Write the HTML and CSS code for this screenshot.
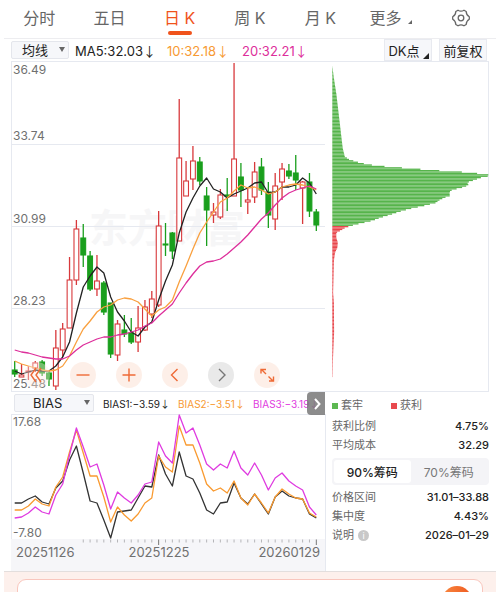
FILE: index.html
```
<!DOCTYPE html>
<html lang="zh">
<head>
    <meta charset="UTF-8">
    <meta name="viewport" content="width=device-width, initial-scale=1.0">
    <title>日K</title>
    <link rel="stylesheet" href="styles.css">
</head>
<body>
    <nav class="tabs">
        <a href="#">分时</a>
        <a href="#">五日</a>
        <a href="#" class="active">日 K</a>
        <a href="#">周 K</a>
        <a href="#">月 K</a>
        <a href="#" class="more">更多</a>
        <button class="settings" aria-label="设置">
            <svg width="20" height="20" viewBox="0 0 20 20" fill="none" stroke="#666" stroke-width="1.3" stroke-linejoin="round">
                <path d="M7 2.2 Q10 4.2 13 2.2 L15.2 3.5 Q15.2 7 18.3 8.7 V11.3 Q15.2 13 15.2 16.5 L13 17.8 Q10 15.8 7 17.8 L4.8 16.5 Q4.8 13 1.7 11.3 V8.7 Q4.8 7 4.8 3.5 Z"/>
                <circle cx="10" cy="10" r="2.8"/>
            </svg>
        </button>
    </nav>

    <main class="stock">
        <div class="toolbar">
            <span class="select">
                <select aria-label="主图指标"><option>均线</option></select>
            </span>
            <span class="ma5">MA5:32.03<i>↓</i></span>
            <span class="ma10">10:32.18<i>↓</i></span>
            <span class="ma20">20:32.21<i>↓</i></span>
            <div class="actions">
                <button class="dk">DK点</button>
                <button>前复权</button>
            </div>
        </div>

        <div class="columns">
            <section class="charts">
                <div class="kline">
                    <svg id="kline" viewBox="11 61 315 331">
                        <text class="watermark" x="89" y="242">东方财富</text>
                        <path class="grid" d="M11.5 61V392M11 61.5H326M11 144.5H325M11 226.5H325M11 308.5H325M11 391.5H326"/>
                        <g class="axis">
                            <text x="13" y="74">36.49</text>
                            <text x="13" y="140">33.74</text>
                            <text x="13" y="223">30.99</text>
                            <text x="13" y="305">28.23</text>
                            <text x="13" y="388">25.48</text>
                        </g>
                    </svg>
                    <div class="controls">
                        <button class="faint" aria-label="最早"><svg viewBox="0 0 26 26"><path d="M12 6L7 13L12 20M17 6L12 13L17 20"/></svg></button>
                        <button aria-label="缩小"><svg viewBox="0 0 26 26"><path d="M6.500 13H19.500"/></svg></button>
                        <button aria-label="放大"><svg viewBox="0 0 26 26"><path d="M6.500 13H19.500M13 6.500V19.500"/></svg></button>
                        <button aria-label="左移"><svg viewBox="0 0 26 26"><path d="M15.500 7L9.500 13L15.500 19"/></svg></button>
                        <button class="off" aria-label="右移"><svg viewBox="0 0 26 26"><path d="M11 7L17 13L11 19"/></svg></button>
                        <button aria-label="全屏"><svg viewBox="0 0 26 26"><path d="M7 11.500V7.500H12M7.500 7.500L12 12M19.500 14.500V19H15M19 19L14.500 14.500"/></svg></button>
                    </div>
                </div>

                <div class="bias-bar">
                    <span class="select">
                        <select aria-label="副图指标"><option>BIAS</option></select>
                    </span>
                    <span class="b1">BIAS1:−3.59<i>↓</i></span>
                    <span class="b2">BIAS2:−3.51<i>↓</i></span>
                    <span class="b3">BIAS3:−3.19<i>↓</i></span>
                    <button class="next" aria-label="更多指标">
                        <svg width="8" height="12" viewBox="0 0 8 12"><path d="M2 1L6.500 6L2 11" fill="none" stroke="#fff" stroke-width="2"/></svg>
                    </button>
                </div>

                <svg id="bias" viewBox="11 414 315 157">
                    <rect x="11" y="539" width="314" height="32" fill="#f6f6f9"/>
                    <path class="grid" d="M11.5 414V539M11 414.5H325M325.5 414V571"/>
                    <g class="axis">
                        <text x="13" y="426">17.68</text>
                        <text x="13" y="537">-7.80</text>
                    </g>
                    <g class="dates">
                        <text x="16" y="557">20251126</text>
                        <text x="159" y="557" text-anchor="middle">20251225</text>
                        <text x="320" y="557" text-anchor="end">20260129</text>
                    </g>
                </svg>
            </section>

            <section class="chips">
                <svg id="chips" viewBox="326 61 163 331">
                    <path class="grid" d="M326 61.5H489M488.5 61V392M326 391.5H489"/>
                </svg>
                <div class="info">
                    <div class="legend">
                        <span class="down">套牢</span>
                        <span class="up">获利</span>
                    </div>
                    <dl>
                        <dt>获利比例</dt><dd>4.75%</dd>
                        <dt>平均成本</dt><dd>32.29</dd>
                    </dl>
                    <div class="segmented">
                        <button class="on">90%筹码</button>
                        <button>70%筹码</button>
                    </div>
                    <dl>
                        <dt>价格区间</dt><dd>31.01–33.88</dd>
                        <dt>集中度</dt><dd>4.43%</dd>
                        <dt>说明 <span class="tip">i</span></dt><dd>2026–01–29</dd>
                    </dl>
                </div>
            </section>
        </div>
    </main>

    <section class="promo">
        <div class="promo-card"><span class="ball"></span></div>
    </section>

    <script src="chart.js"></script>
</body>
</html>
```
FILE: styles.css
```
* {
    box-sizing: border-box;
}
body {
    margin: 0;
    height: 100vh;
    display: flex;
    flex-direction: column;
    overflow: hidden;
    background: #fff;
    color: #222;
    font-family: Inter, "Noto Sans CJK SC", sans-serif;
    font-size: 13px;
}
button, select {
    font: inherit;
    color: inherit;
    border: 0;
    padding: 0;
    margin: 0;
    background: none;
}
i {
    font-style: normal;
    font-family: "Noto Sans CJK SC", sans-serif;
    display: inline-block;
    width: 12px;
}
svg {
    display: block;
}

/* period tabs */
.tabs {
    display: flex;
    height: 39px;
    margin: 0 4px;
    border-bottom: 1px solid #ededf0;
}
.tabs a, .settings {
    flex: 1;
    display: flex;
    justify-content: center;
    position: relative;
    padding-top: 6px;
    line-height: 24px;
    font-size: 16px;
    color: #666;
    text-decoration: none;
}
.settings {
    padding-top: 8px;
}
.tabs .active {
    color: #f0531c;
}
.tabs .active::after {
    content: "";
    position: absolute;
    left: 50%;
    bottom: 3px;
    width: 24px;
    height: 4px;
    margin-left: -12px;
    border-radius: 2px;
    background: #f0531c;
}
.more::after {
    content: "";
    align-self: flex-start;
    margin: 14px 0 0 6px;
    border: 2px solid #666;
    border-top-color: transparent;
    border-left-color: transparent;
}

/* main chart header */
.stock {
    margin: 0 4px;
    padding: 0 7px;
}
.toolbar {
    display: flex;
    align-items: center;
    height: 22px;
    white-space: nowrap;
}
.select {
    position: relative;
    flex: none;
    width: 58px;
    height: 18px;
    margin-right: 6px;
}
.select select {
    appearance: none;
    width: 100%;
    height: 100%;
    padding-left: 10px;
    border: 1px solid #e4e6ec;
    border-radius: 2px;
    background: #f6f7fa;
    line-height: 16px;
}
.select::after {
    content: "";
    position: absolute;
    right: 4px;
    top: 6px;
    border: 3px solid transparent;
    border-top: 5px solid #666;
    border-bottom: 0;
}
.ma5 {
    width: 92px;
}
.ma10 {
    width: 75px;
    color: #f79a33;
}
.ma20 {
    color: #dd2f9b;
}
.actions {
    display: flex;
    gap: 7px;
    margin: 0 2px 0 auto;
}
.actions button {
    position: relative;
    width: 48px;
    height: 22px;
    border: 1px solid #e8eaf0;
    background: #f6f7fa;
}
.actions .dk {
    padding-right: 8px;
}
.dk::after {
    content: "";
    position: absolute;
    right: 2px;
    bottom: 1px;
    border: 3px solid #222;
    border-top-color: transparent;
    border-left-color: transparent;
}

/* charts */
.columns {
    display: grid;
    grid-template-columns: 315fr 163fr;
}
.columns section {
    min-width: 0;
}
.columns section > svg, .kline > svg {
    width: 100%;
    height: auto;
}
.kline {
    position: relative;
}
.grid {
    stroke: #e6e9f0;
    fill: none;
}
.axis {
    font-size: 12px;
    fill: #707070;
}
.dates {
    font-size: 13px;
    fill: #707070;
}
.watermark {
    font-size: 39px;
    font-weight: 700;
    fill: #f6f6f7;
}
.line {
    fill: none;
    stroke-width: 1.3;
    stroke-linejoin: round;
}
.controls {
    position: absolute;
    left: 13px;
    bottom: 4px;
    display: flex;
    gap: 20px;
}
.controls button {
    width: 26px;
    height: 26px;
    border-radius: 50%;
    background: rgba(253, 236, 228, 0.85);
}
.controls path {
    fill: none;
    stroke: #ee6a35;
    stroke-width: 1.4;
}
.controls .faint {
    background: rgba(253, 236, 228, 0.4);
}
.controls .off {
    background: #e9e9e9;
}
.controls .off path {
    stroke: #777;
}

/* indicator header */
.bias-bar {
    position: relative;
    display: flex;
    align-items: center;
    height: 22px;
    padding-left: 3px;
    font-size: 10px;
    white-space: nowrap;
}
.bias-bar .select {
    width: 80px;
    margin-right: 9px;
    font-size: 13px;
}
.bias-bar select {
    padding-left: 18px;
}
.bias-bar span + span {
    flex: none;
    width: 75px;
}
.bias-bar .b2 {
    color: #f79a33;
}
.bias-bar .b3 {
    color: #df3be0;
}
.next {
    position: absolute;
    right: 1px;
    top: 0;
    width: 18px;
    height: 23px;
    padding-left: 6px;
    border-radius: 4px 0 0 4px;
    background: rgba(120, 120, 120, 0.85);
}

/* chip distribution */
.info {
    padding: 5px 0 0 6px;
    font-size: 12px;
}
.legend {
    display: flex;
    height: 20px;
    line-height: 17px;
    font-size: 11px;
    color: #666;
}
.legend span {
    width: 59px;
}
.legend span::before {
    content: "";
    display: inline-block;
    width: 6px;
    height: 6px;
    margin-right: 3px;
    background: #5cb851;
}
.legend .up::before {
    background: #e8494e;
}
dl {
    display: grid;
    grid-template-columns: auto 1fr;
    margin: 0;
    font-size: 11px;
    line-height: 19px;
}
dt {
    color: #666;
}
dd {
    margin: 0;
    text-align: right;
    font-weight: 500;
}
.segmented {
    display: flex;
    height: 27px;
    margin: 3px 0;
    padding: 2px;
    border-radius: 4px;
    background: #f4f4f7;
}
.segmented button {
    flex: 1;
    color: #777;
}
.segmented .on {
    border-radius: 3px;
    background: #fff;
    color: #222;
    font-weight: 500;
}
.tip {
    display: inline-block;
    width: 11px;
    height: 11px;
    margin-left: 1px;
    border-radius: 50%;
    background: #c8c8c8;
    color: #fff;
    font-size: 9px;
    line-height: 11px;
    text-align: center;
}

/* bottom banner */
.promo {
    flex: 1;
    min-height: 0;
    margin: 0 4px;
    padding: 7px 13px 0;
    overflow: hidden;
    border-top: 1px solid #e3dedd;
    background: #fdf0ec;
}
.promo-card {
    height: 60px;
    padding: 6px 10px;
    border: 1px solid #f9c6bd;
    border-radius: 9px;
    background: #fff;
}
.ball {
    display: block;
    width: 30px;
    height: 30px;
    margin-left: auto;
    border-radius: 50%;
    background: linear-gradient(90deg, #f9873f, #ee5a20);
}
```
FILE: chart.js
```
const NS = 'http://www.w3.org/2000/svg';
const x = i => 14.7 + i * 6.855;

function add(parent, tag, attrs) {
    const el = document.createElementNS(NS, tag);
    for (const k in attrs) el.setAttribute(k, attrs[k]);
    parent.appendChild(el);
}

function line(svg, points, color) {
    add(svg, 'polyline', {
        class: 'line',
        stroke: color,
        points: points.map(p => x(p[0]) + ',' + p[1]).join(' ')
    });
}
const each = ys => ys.map((y, i) => [i, y]);

// high, body top, body bottom, low, rising
const candles = [
    [361, 370, 374, 377, 0], [364, 375, 377, 377, 1], [366, 371, 372, 380, 1], [361, 363, 368, 372, 1],
    [360, 362, 373, 376, 0], [371, 373, 379, 386, 0], [330, 348, 386, 390, 1], [323, 329, 350, 357, 1],
    [257, 280, 328, 328, 1], [220, 229, 280, 285, 1], [224, 238, 255, 267, 0], [251, 256, 289, 291, 0],
    [255, 281, 289, 296, 1], [281, 283, 312, 315, 0], [303, 303, 354, 358, 0], [320, 324, 355, 361, 1],
    [315, 330, 334, 337, 0], [318, 333, 342, 344, 0], [306, 328, 342, 352, 1], [300, 307, 330, 331, 1],
    [291, 299, 314, 318, 1], [211, 226, 305, 307, 1], [223, 244, 245, 256, 0], [232, 233, 251, 259, 0],
    [99, 158, 241, 241, 1], [161, 181, 196, 196, 1], [146, 161, 179, 190, 1], [157, 162, 181, 185, 0],
    [187, 196, 210, 246, 0], [203, 212, 215, 223, 1], [189, 195, 217, 219, 1], [178, 195, 196, 211, 0],
    [63, 159, 196, 196, 1], [163, 177, 190, 207, 0], [189, 200, 202, 214, 1], [162, 172, 197, 203, 1],
    [158, 167, 190, 195, 0], [182, 192, 215, 228, 0], [173, 186, 219, 230, 1], [163, 169, 182, 200, 1],
    [164, 171, 176, 179, 0], [155, 173, 180, 190, 0], [181, 182, 188, 224, 1], [173, 182, 211, 217, 0],
    [209, 212, 225, 231, 0]
];

const ma5 = [371, 374, 372, 370, 371, 371, 366, 357, 342, 313, 287, 276, 267, 273, 297, 312, 321, 332, 336,
    327, 322, 300, 281, 265, 233, 212, 198, 186, 178, 189, 192, 198, 194, 191, 188, 183, 182, 193, 192, 187,
    187, 185, 178, 183, 194];
const ma10 = [361, 364, 366, 368, 370, 371, 370, 366, 356, 342, 329, 321, 312, 307, 305, 300, 298, 299, 302,
    309, 316, 310, 307, 300, 282, 266, 249, 233, 222, 212, 202, 198, 191, 185, 188, 187, 190, 194, 192, 187,
    185, 184, 185, 187, 190];
const ma20 = [350, 352, 353, 355, 357, 358, 359, 359, 356, 350, 345, 342, 339, 337, 337, 335, 334, 332, 330,
    326, 323, 316, 310, 304, 293, 283, 274, 266, 262, 261, 259, 254, 248, 242, 235, 227, 219, 213, 205, 198,
    193, 190, 188, 186, 189];

const kline = document.getElementById('kline');
candles.forEach(([hi, top, bottom, lo, up], i) => {
    const color = up ? '#d8393c' : '#1a9f1d';
    const c = x(i);
    add(kline, 'path', { d: `M${c} ${hi}V${top}M${c} ${bottom}V${lo}`, stroke: color, 'stroke-width': 1.3 });
    add(kline, 'rect', {
        x: c - 2.4, y: top, width: 4.8, height: bottom - top,
        fill: up ? '#fff' : color, stroke: color, 'stroke-width': 1.1
    });
});
line(kline, each(ma5), '#222');
line(kline, each(ma10), '#f9a03f');
line(kline, each(ma20), '#dd2f9b');

const bias1 = [503, 503, 499, 496, 502, 504, 488, 481, 460, 446, 473, 501, 503, 520, 538, 512, 511, 510, 498,
    486, 487, 455, 474, 486, 452, 476, 479, 493, 510, 514, 503, 502, 483, 498, 504, 494, 504, 514, 497, 491,
    496, 498, 499, 514, 518];
const bias2 = [510, 510, 506, 499, 504, 506, 487, 477, 452, 430, 453, 476, 476, 497, 522, 507, 515, 521, 514,
    503, 498, 456, 467, 472, 426, 445, 445, 463, 484, 491, 488, 493, 481, 498, 505, 494, 503, 513, 497, 489,
    494, 498, 499, 513, 517];
const bias3 = [518, 517, 513, 507, 512, 514, 495, 484, 455, 428, 447, 467, 464, 485, 509, 492, 498, 503, 495,
    484, 482, 442, 456, 463, 415, 433, 428, 445, 464, 470, 464, 468, 451, 468, 475, 463, 475, 490, 478, 473,
    481, 486, 490, 507, 515];

const bias = document.getElementById('bias');
for (let i = 10; i < 45; i++) {
    const major = i === 21 || i === 44;
    add(bias, 'path', { d: `M${x(i)} 539.5V${major ? 545 : 542.5}`, stroke: major ? '#777' : '#b5b5b8' });
}
line(bias, each(bias1), '#333');
line(bias, each(bias2), '#f99a30');
line(bias, each(bias3), '#df3be0');

// chip outline: y, bar length
const outline = [
    [65, 0], [77, 1.5], [93, 4], [110, 6], [127, 8], [140, 9.5], [148, 10.5], [156, 12.5], [159, 17],
    [162, 27], [164, 36], [166, 54], [168, 80], [170, 107], [171, 125], [172.5, 142], [174, 156], [175.5, 156],
    [176.5, 150], [179, 143], [181, 137], [182, 135], [184, 136], [186, 133], [188, 125], [190, 118],
    [193, 117], [195, 118], [197, 112], [200, 106], [202, 104], [205, 92], [208, 78], [211, 67], [214, 58],
    [217, 48], [220, 40], [223, 27], [225, 19], [227, 13], [230, 8], [232, 4], [237, 4], [242, 5.5],
    [247, 5], [252, 2.7], [260, 1.6], [278, 1.2], [292, 0.8], [302, 1.6], [332, 1.8], [350, 1],
    [360, 0.6], [377, 0.3]
];
const chips = document.getElementById('chips');
let k = 0;
for (let y = 65; y < 377; y += 1.4) {
    while (outline[k + 1][0] < y) k++;
    const [y0, w0] = outline[k];
    const [y1, w1] = outline[k + 1];
    add(chips, 'rect', {
        x: 332.3, y: y, height: 1.3,
        width: w0 + (w1 - w0) * (y - y0) / (y1 - y0),
        fill: y < 225 ? '#56b44b' : '#e8474c'
    });
}
```
